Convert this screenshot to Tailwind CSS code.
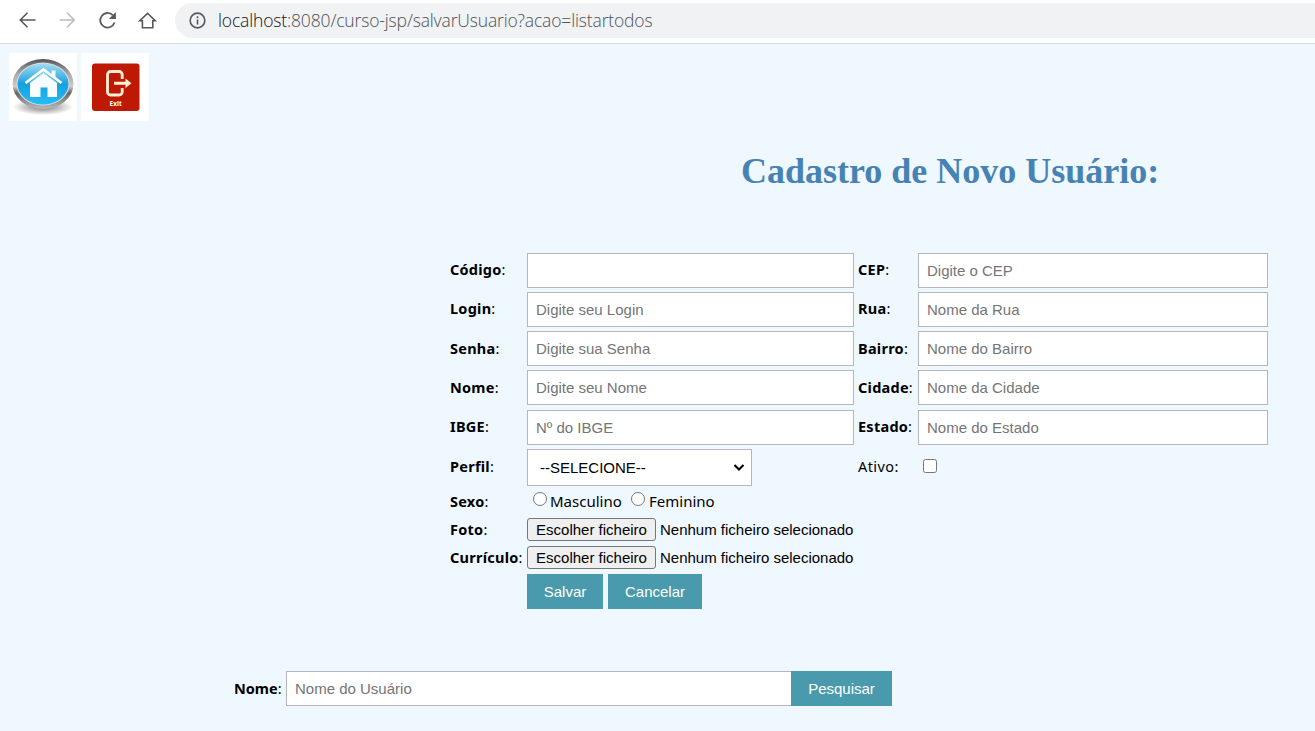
<!DOCTYPE html>
<html lang="pt">
<head>
<meta charset="utf-8">
<title>Cadastro de Novo Usuário</title>
<script src="https://cdn.jsdelivr.net/npm/@tailwindcss/browser@4"></script>
</head>
<body class="h-[731px] overflow-hidden bg-[#eff7ff] font-['Liberation_Sans',sans-serif] text-[15px] text-black">
<header class="flex h-11 items-start border-b border-[#d5dade] bg-white">
  <nav class="flex h-10 w-[175px] shrink-0 items-center gap-5 pl-[17px]">
    <svg class="size-5" viewBox="0 0 20 20" fill="none" stroke="#55585c" stroke-width="1.6"><path d="M18.500 10H3.800M10.500 2.800L3.300 10l7.200 7.200"/></svg>
    <svg class="size-5" viewBox="0 0 20 20" fill="none" stroke="#babcbe" stroke-width="1.6"><path d="M2.500 10H17M10 2.800L17.200 10L10 17.200"/></svg>
    <svg class="size-5" viewBox="0 0 20 20"><path d="M17.500 12.500A7.300 7.300 0 1 1 15.800 5.200" fill="none" stroke="#55585c" stroke-width="1.800"/><path d="M18.900 2v7h-7z" fill="#55585c"/></svg>
    <svg class="size-5" viewBox="0 0 20 20" fill="none" stroke="#55585c" stroke-width="1.600"><path d="M2.800 10.700H5.400v7h10.400v-7h2.400L10.600 3.300z"/></svg>
  </nav>
  <div class="mt-[3px] flex h-[35px] flex-1 items-center rounded-l-full bg-[#f0f2f4] pl-[14px]">
    <svg class="size-[17px]" viewBox="0 0 16 16" fill="none" stroke="#55585c" stroke-width="1.500"><circle cx="8" cy="8" r="6.900"/><path d="M8 7v4.700M8 4v1.800"/></svg>
    <p class="ml-[12px] whitespace-nowrap font-['Open_Sans',sans-serif] text-[17.500px] font-light tracking-[-0.150px] text-[#4d5156]"><span class="text-[#101114]">localhost</span>:8080/curso-jsp/salvarUsuario?acao=listartodos</p>
  </div>
</header>

<div class="flex gap-1 pt-[9px] pl-[9px]">
  <a class="size-[68px] bg-white">
    <svg class="size-full" viewBox="0 0 68 68">
      <defs>
        <linearGradient id="rim" x1="0" y1="0" x2="0" y2="1"><stop offset="0" stop-color="#555"/><stop offset=".3" stop-color="#aaa"/><stop offset=".55" stop-color="#ccc"/><stop offset=".68" stop-color="#666"/><stop offset="1" stop-color="#bbb"/></linearGradient>
        <linearGradient id="orb" x1="0" y1="0" x2="0" y2="1"><stop offset="0" stop-color="#a5dcf2"/><stop offset=".5" stop-color="#16a0e0"/><stop offset="1" stop-color="#25bdf5"/></linearGradient>
        <radialGradient id="shade"><stop offset="0" stop-color="#777"/><stop offset="1" stop-color="#777" stop-opacity="0"/></radialGradient>
      </defs>
      <ellipse cx="34" cy="54" rx="30" ry="8" fill="url(#shade)"/>
      <ellipse cx="34" cy="31" rx="30.500" ry="25" fill="url(#rim)"/>
      <ellipse cx="34" cy="31" rx="26.500" ry="21.500" fill="#ddd"/>
      <ellipse cx="34" cy="31" rx="25.500" ry="20.500" fill="url(#orb)"/>
      <path d="M21 30L34.500 19L48 30V44H38.500V34.500h-7V44H21z" fill="#f7fcff"/>
      <path d="M42.500 17.500h4v8l-4-3z" fill="#f7fcff"/>
      <path d="M16.500 30L34.500 16.500L52.500 30" fill="none" stroke="#fff" stroke-width="2.800"/>
      <path d="M20.500 30.200L34.500 19.700L48.500 30.200" fill="none" stroke="#8fd0ee" stroke-width=".9"/>
    </svg>
  </a>
  <a class="size-[68px] bg-white">
    <svg class="size-full" viewBox="0 0 68 68">
      <rect x="11" y="10.500" width="47.500" height="47.500" rx="3" fill="#bd1905"/>
      <path d="M41.200 26v-4.500a3 3 0 0 0-3-3H29.500a3 3 0 0 0-3 3v17.500a3 3 0 0 0 3 3H38.200a3 3 0 0 0 3-3V35" fill="none" stroke="#fff0d5" stroke-width="2.800"/>
      <path d="M33 28.700h11.500V25.500L50.500 30.200l-6 4.700v-3.200H33z" fill="#fff0d5"/>
      <text x="34.700" y="53.200" text-anchor="middle" font-family="Noto Sans, sans-serif" font-weight="bold" font-size="6.500" fill="#fff">Exit</text>
    </svg>
  </a>
</div>

<h1 class="mt-[26px] ml-[741px] h-12 whitespace-nowrap font-['Liberation_Serif',serif] text-[36px] leading-[48px] font-bold text-[#4682b4]">Cadastro de Novo Usuário:</h1>

<form class="mt-[58px] ml-[450px] grid grid-cols-[77px_331px_60px_350px] grid-rows-[39px_39px_39px_40px_39px_41px_28px_28px_28px_35px] items-start [&_b]:font-['Noto_Sans',sans-serif] [&_b]:text-[14.500px] [&_b]:leading-[33px] [&_b]:tracking-[0.250px] [&_i]:font-normal [&_i]:not-italic [&_input[type=text]]:h-[35px] [&_input[type=text]]:border [&_input[type=text]]:border-[#b4b8bd] [&_input[type=text]]:bg-white [&_input[type=text]]:px-2 [&_input[type=text]]:placeholder:text-[#757575]">
  <b>Código<i>:</i></b><input type="text" class="w-[327px]">
  <b>CEP<i>:</i></b><input type="text" class="w-[350px]" placeholder="Digite o CEP">
  <b>Login<i>:</i></b><input type="text" class="w-[327px]" placeholder="Digite seu Login">
  <b>Rua<i>:</i></b><input type="text" class="w-[350px]" placeholder="Nome da Rua">
  <b class="pt-px">Senha<i>:</i></b><input type="text" class="w-[327px]" placeholder="Digite sua Senha">
  <b class="pt-px">Bairro<i>:</i></b><input type="text" class="w-[350px]" placeholder="Nome do Bairro">
  <b class="pt-px">Nome<i>:</i></b><input type="text" class="w-[327px]" placeholder="Digite seu Nome">
  <b class="pt-px">Cidade<i>:</i></b><input type="text" class="w-[350px]" placeholder="Nome da Cidade">
  <b>IBGE<i>:</i></b><input type="text" class="w-[327px]" placeholder="Nº do IBGE">
  <b>Estado<i>:</i></b><input type="text" class="w-[350px]" placeholder="Nome do Estado">
  <b class="pt-px">Perfil<i>:</i></b>
  <div class="flex h-[37px] w-[225px] items-center justify-between border border-[#b4b8bd] bg-white pr-[6px] pl-3"><span class="pt-px">--SELECIONE--</span><svg class="h-3 w-3" viewBox="0 0 12 12" fill="none" stroke="#000" stroke-width="2.100"><path d="M1.500 3L6 7.500L10.500 3"/></svg></div>
  <span class="font-['Noto_Sans',sans-serif] leading-[35px] text-[14.500px] tracking-[0.400px]">Ativo:</span>
  <input type="checkbox" class="mt-[10px] ml-[5px] size-[14px]">
  <b class="-mt-[5px]">Sexo<i>:</i></b>
  <div class="-mt-px flex items-center pl-[6px] font-['Noto_Sans',sans-serif] text-[15px] leading-6"><input type="radio" class="mb-1 size-[14px]"><span class="ml-[3px] w-[77px]">Masculino</span><input type="radio" class="mb-1 ml-1 size-[14px]"><span class="ml-1">Feminino</span></div><span></span><span></span>
  <b class="-mt-[5px]">Foto<i>:</i></b>
  <div class="flex items-center whitespace-nowrap"><button type="button" class="mr-1 h-[23px] w-[129px] rounded-[3px] border border-[#767676] bg-[#efefef]">Escolher ficheiro</button><span class="pt-px">Nenhum ficheiro selecionado</span></div><span></span><span></span>
  <b class="-mt-[5px]">Currículo<i>:</i></b>
  <div class="flex items-center whitespace-nowrap"><button type="button" class="mr-1 h-[23px] w-[129px] rounded-[3px] border border-[#767676] bg-[#efefef]">Escolher ficheiro</button><span class="pt-px">Nenhum ficheiro selecionado</span></div><span></span><span></span>
  <span></span>
  <div class="flex gap-[5px] text-white"><button type="button" class="h-[35px] w-[76px] bg-[#4a9aad] pt-px">Salvar</button><button type="button" class="h-[35px] w-[94px] bg-[#4a9aad] pt-px">Cancelar</button></div>
</form>

<form class="mt-[62px] ml-[234px] flex">
  <b class="w-[52px] font-['Noto_Sans',sans-serif] text-[14.500px] leading-[34px]">Nome<span class="font-normal">:</span></b>
  <input type="text" class="h-[35px] w-[505px] border border-r-0 border-[#b4b8bd] bg-white px-2 placeholder:text-[#757575]" placeholder="Nome do Usuário">
  <button type="button" class="h-[35px] w-[101px] bg-[#4a9aad] pt-px text-white">Pesquisar</button>
</form>
</body>
</html>
